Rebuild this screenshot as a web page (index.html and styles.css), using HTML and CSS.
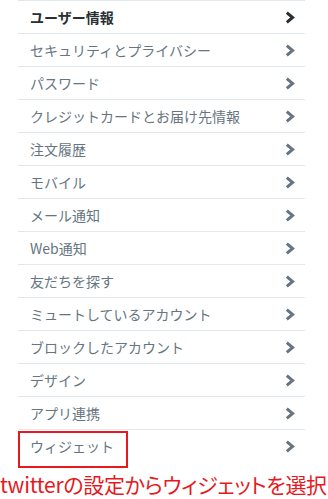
FILE: index.html
```html
<!DOCTYPE html>
<html lang="ja">
<head>
<meta charset="utf-8">
<link rel="stylesheet" href="styles.css">
</head>
<body>
<ul class="menu">
  <li class="row active"><span>ユーザー情報</span><svg class="chev" viewBox="0 0 10 13" width="10" height="13"><path d="M1.8 1.6 L7.6 6.5 L1.8 11.4"/></svg></li>
  <li class="row"><span>セキュリティとプライバシー</span><svg class="chev" viewBox="0 0 10 13" width="10" height="13"><path d="M1.8 1.6 L7.6 6.5 L1.8 11.4"/></svg></li>
  <li class="row"><span>パスワード</span><svg class="chev" viewBox="0 0 10 13" width="10" height="13"><path d="M1.8 1.6 L7.6 6.5 L1.8 11.4"/></svg></li>
  <li class="row"><span>クレジットカードとお届け先情報</span><svg class="chev" viewBox="0 0 10 13" width="10" height="13"><path d="M1.8 1.6 L7.6 6.5 L1.8 11.4"/></svg></li>
  <li class="row"><span>注文履歴</span><svg class="chev" viewBox="0 0 10 13" width="10" height="13"><path d="M1.8 1.6 L7.6 6.5 L1.8 11.4"/></svg></li>
  <li class="row"><span>モバイル</span><svg class="chev" viewBox="0 0 10 13" width="10" height="13"><path d="M1.8 1.6 L7.6 6.5 L1.8 11.4"/></svg></li>
  <li class="row"><span>メール通知</span><svg class="chev" viewBox="0 0 10 13" width="10" height="13"><path d="M1.8 1.6 L7.6 6.5 L1.8 11.4"/></svg></li>
  <li class="row"><span>Web通知</span><svg class="chev" viewBox="0 0 10 13" width="10" height="13"><path d="M1.8 1.6 L7.6 6.5 L1.8 11.4"/></svg></li>
  <li class="row"><span>友だちを探す</span><svg class="chev" viewBox="0 0 10 13" width="10" height="13"><path d="M1.8 1.6 L7.6 6.5 L1.8 11.4"/></svg></li>
  <li class="row"><span>ミュートしているアカウント</span><svg class="chev" viewBox="0 0 10 13" width="10" height="13"><path d="M1.8 1.6 L7.6 6.5 L1.8 11.4"/></svg></li>
  <li class="row"><span>ブロックしたアカウント</span><svg class="chev" viewBox="0 0 10 13" width="10" height="13"><path d="M1.8 1.6 L7.6 6.5 L1.8 11.4"/></svg></li>
  <li class="row"><span>デザイン</span><svg class="chev" viewBox="0 0 10 13" width="10" height="13"><path d="M1.8 1.6 L7.6 6.5 L1.8 11.4"/></svg></li>
  <li class="row"><span>アプリ連携</span><svg class="chev" viewBox="0 0 10 13" width="10" height="13"><path d="M1.8 1.6 L7.6 6.5 L1.8 11.4"/></svg></li>
  <li class="row last"><span>ウィジェット</span><svg class="chev" viewBox="0 0 10 13" width="10" height="13"><path d="M1.8 1.6 L7.6 6.5 L1.8 11.4"/></svg><div class="highlight"></div></li>
</ul>
<p class="caption">twitterの設定からウィジェットを選択</p>
</body>
</html>
```
FILE: styles.css
```css
html, body {
  margin: 0;
  padding: 0;
  background: #ffffff;
}
body {
  width: 328px;
  height: 499px;
  overflow: hidden;
  font-family: "Noto Sans CJK JP", "Noto Sans", sans-serif;
}
.menu {
  list-style: none;
  margin: 0 23px 0 18px;
  padding: 0;
  border-top: 1px solid #e1e8ed;
}
.row {
  position: relative;
  display: flex;
  align-items: center;
  justify-content: space-between;
  height: 32px;
  padding: 0 10px 0 12px;
  border-bottom: 1px solid #e1e8ed;
  font-size: 14px;
  color: #66757f;
}
.row.last {
  border-bottom: none;
}
.row.active {
  color: #292f33;
  font-weight: 700;
}
.chev {
  fill: none;
  stroke: #66757f;
  stroke-width: 3;
  stroke-linecap: butt;
  stroke-linejoin: miter;
}
.row.active .chev {
  stroke: #292f33;
}
.highlight {
  position: absolute;
  left: 0;
  top: 1px;
  width: 106px;
  height: 33px;
  border: 2px solid #e5191e;
}
.caption {
  margin: 10px 0 0 0;
  font-size: 21px;
  line-height: 24px;
  color: #e5191e;
  white-space: nowrap;
  font-feature-settings: "palt" 1;
  letter-spacing: -0.3px;
}
```
